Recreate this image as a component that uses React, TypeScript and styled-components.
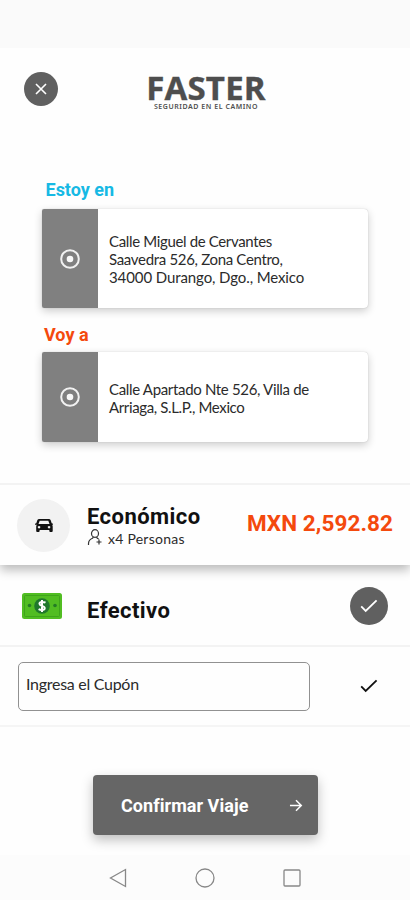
import React from "react";
import styled, { createGlobalStyle } from "styled-components";

const GlobalStyle = createGlobalStyle`
  * { box-sizing: border-box; }
  body { margin: 0; background: #fefefe; }
`;

const Screen = styled.main`
  width: 410px;
  height: 900px;
  display: flex;
  flex-direction: column;
  overflow: hidden;
  background: #fefefe;
  font-family: Roboto, sans-serif;
  color: #111;
`;

const StatusBar = styled.div`
  height: 48px;
  flex: none;
  background: #fafafa;
`;

const Header = styled.header`
  height: 130px;
  flex: none;
  display: flex;
  align-items: flex-start;
  padding: 24px 24px 0;
`;

const RoundButton = styled.button<{ $size: number }>`
  width: ${(p) => p.$size}px;
  height: ${(p) => p.$size}px;
  flex: none;
  padding: 0;
  border: 0;
  border-radius: 50%;
  background: #606060;
  display: flex;
  align-items: center;
  justify-content: center;
`;

const Brand = styled.div`
  width: 118px;
  margin-left: 89px;
  padding-top: 1px;
  display: flex;
  flex-direction: column;
  align-items: center;
  white-space: nowrap;
  font-family: "Open Sans", sans-serif;
  color: #4e4e4e;
`;

const BrandName = styled.div`
  font-size: 33px;
  line-height: 30px;
  font-weight: 700;
  letter-spacing: 0.2px;
  -webkit-text-stroke: 0.4px #4e4e4e;
`;

const BrandTagline = styled.div`
  font-family: "Noto Sans", sans-serif;
  font-size: 7px;
  line-height: 8px;
  font-weight: 600;
  letter-spacing: 0.55px;
`;

const Trip = styled.section`
  height: 305px;
  flex: none;
  padding: 0 42px;
`;

const StopLabel = styled.h2<{ $color: string; $indent: number; $height: number; $gap: number }>`
  margin: 0;
  height: ${(p) => p.$height}px;
  padding: 0 0 ${(p) => p.$gap}px ${(p) => p.$indent}px;
  display: flex;
  align-items: flex-end;
  font-size: 18px;
  line-height: 22px;
  font-weight: 700;
  color: ${(p) => p.$color};
`;

const StopCard = styled.div<{ $height: number }>`
  width: 326px;
  height: ${(p) => p.$height}px;
  display: flex;
  overflow: hidden;
  border-radius: 2px 4px 4px 2px;
  background: #fff;
  box-shadow: 0 3px 9px rgba(0, 0, 0, 0.2), 0 0 1px rgba(0, 0, 0, 0.25);
`;

const StopMarker = styled.div`
  width: 56px;
  flex: none;
  background: #808080;
  display: flex;
  align-items: center;
  justify-content: center;
`;

const Address = styled.div`
  padding: 1px 0 0 11px;
  align-self: center;
  font-family: Lato, sans-serif;
  font-size: 15px;
  line-height: 18px;
  color: #2b2b2b;
  white-space: nowrap;
`;

const AddressLine = styled.div<{ $tracking: number }>`
  letter-spacing: ${(p) => p.$tracking}px;
`;

const RideRow = styled.section`
  height: 82px;
  margin-bottom: 1px;
  flex: none;
  position: relative;
  display: flex;
  align-items: center;
  padding: 0 17px;
  border-top: 2px solid #f3f3f3;
  background: #fefefe;
  box-shadow: 0 5px 10px rgba(0, 0, 0, 0.27);
  clip-path: inset(0 0 -24px 0);
`;

const VehicleBadge = styled.div`
  width: 53px;
  height: 53px;
  border-radius: 50%;
  background: #f2f2f2;
  display: flex;
  align-items: center;
  justify-content: center;
`;

const RideInfo = styled.div`
  margin-left: 17px;
`;

const RowTitle = styled.div`
  font-size: 22px;
  line-height: 24px;
  font-weight: 700;
  letter-spacing: 0.45px;
`;

const Capacity = styled.div`
  height: 17px;
  display: flex;
  align-items: center;
  gap: 4px;
  font-family: Lato, sans-serif;
  font-size: 14px;
  line-height: 18px;
  color: #2b2b2b;
`;

const CapacityText = styled.span`
  padding-top: 3px;
  letter-spacing: 0.25px;
`;

const Price = styled.div`
  margin-left: auto;
  font-size: 22.5px;
  line-height: 28px;
  font-weight: 700;
  letter-spacing: 0.08px;
  color: #f4490d;
  padding-bottom: 5px;
  white-space: nowrap;
`;

const PaymentRow = styled.section`
  height: 81px;
  flex: none;
  display: flex;
  align-items: center;
  padding: 0 22px;
  border-bottom: 2px solid #f3f3f3;
`;

const PaymentTitle = styled(RowTitle)`
  margin: 10px auto 0 25px;
`;

const CouponRow = styled.section`
  height: 80px;
  flex: none;
  display: flex;
  align-items: center;
  padding: 0 32px 0 18px;
  border-bottom: 2px solid #f5f5f5;
`;

const CouponField = styled.div`
  width: 292px;
  height: 49px;
  margin-right: auto;
  padding: 11px 7px;
  border: 1px solid #919191;
  border-radius: 5px;
  font-family: Lato, sans-serif;
  font-size: 16px;
  line-height: 20px;
  letter-spacing: -0.28px;
  color: #2b2b2b;
`;

const Footer = styled.section`
  height: 128px;
  flex: none;
  display: flex;
  justify-content: center;
  align-items: flex-start;
  padding-top: 48px;
`;

const ConfirmButton = styled.button`
  width: 225px;
  height: 60px;
  margin-left: 1px;
  display: flex;
  align-items: center;
  justify-content: space-between;
  padding: 0 15px 0 28px;
  border: 0;
  border-radius: 4px;
  background: #666;
  color: #fff;
  font-family: Roboto, sans-serif;
  font-size: 18px;
  font-weight: 700;
  letter-spacing: 0.05px;
  box-shadow: 0 5px 12px rgba(0, 0, 0, 0.25);
`;

const NavBar = styled.nav`
  height: 45px;
  flex: none;
  display: flex;
  justify-content: center;
  align-items: center;
  gap: 67px;
  background: #fcfcfc;
`;

const Target = () => (
  <svg width="20" height="20" viewBox="0 0 20 20">
    <circle cx="10" cy="10" r="8.8" fill="none" stroke="#f1f1f1" strokeWidth="2" />
    <circle cx="10" cy="10" r="3.3" fill="#f8f8f8" />
  </svg>
);

const Check = ({ color }: { color: string }) => (
  <svg width="18" height="14" viewBox="0 0 18 14" fill="none" stroke={color} strokeWidth="1.8">
    <path d="M1.2 7.4 5.7 12 16.6 1.4" />
  </svg>
);

const Car = () => (
  <svg width="18" height="13" viewBox="0 0 18 14" preserveAspectRatio="none">
    <path
      fill="#111"
      fillRule="evenodd"
      d="M4.2 0h9.6q1.4 0 1.9 1.4l1 3.1 1.3.5v1.2l-1 .1q.7.8.7 1.8V13q0 1-1 1h-1.4q-1 0-1-1v-1.2H4.6V13q0 1-1 1H2.2q-1 0-1-1V8.100q0-1 .7-1.800L0 6.200V5l1.300-.5 1-3.100Q2.800 0 4.200 0ZM4.700 1.800 3.500 5.500h11l-1.200-3.700ZM4 7.500a1.300 1.300 0 1 0 .1 0ZM14 7.500a1.300 1.300 0 1 0 .1 0Z"
    />
  </svg>
);

const PersonPlus = () => (
  <svg width="17" height="17" viewBox="0 0 17 17" fill="none" stroke="#333" strokeWidth="1.2">
    <ellipse cx="8" cy="4.5" rx="3.5" ry="3.8" />
    <path d="M1.5 16v-1.5Q1.7 10.500 5.500 9.200L6.500 8M9.500 8q.5 1.500 2.200 2M12 10.500v5M9.500 13h5" />
  </svg>
);

const Banknote = () => (
  <svg width="40" height="26" viewBox="0 0 40 26">
    <rect width="40" height="26" rx="2.5" fill="#51bd22" />
    <rect x="2.5" y="2.5" width="35" height="21" rx="1" fill="none" stroke="#3ea51b" />
    <circle cx="7.5" cy="12.5" r="1.8" fill="#247c25" />
    <circle cx="33" cy="12.5" r="1.8" fill="#247c25" />
    <circle cx="20" cy="13" r="7.8" fill="#20782d" />
    <path
      d="M23.5 9.7Q21.5 8.6 19.5 9c-3 .6-2.5 3.2.5 3.9 3.5.8 3.5 3.6.6 4q-2 .3-4-.8M20 7v12"
      fill="none"
      stroke="#fff"
      strokeWidth="2"
    />
  </svg>
);

export default function App() {
  return (
    <>
      <GlobalStyle />
      <Screen>
        <StatusBar />
        <Header>
          <RoundButton $size={34} aria-label="Cerrar">
            <svg width="12" height="12" viewBox="0 0 12 12" stroke="#fff" strokeWidth="1.6">
              <path d="m1 1 10 10M11 1 1 11" />
            </svg>
          </RoundButton>
          <Brand>
            <BrandName>FASTER</BrandName>
            <BrandTagline>SEGURIDAD EN EL CAMINO</BrandTagline>
          </Brand>
        </Header>
        <Trip>
          <StopLabel $color="#16b9e4" $indent={3.5} $height={31} $gap={8}>Estoy en</StopLabel>
          <StopCard $height={99}>
            <StopMarker><Target /></StopMarker>
            <Address>
              <AddressLine $tracking={-0.35}>Calle Miguel de Cervantes</AddressLine>
              <AddressLine $tracking={-0.32}>Saavedra 526, Zona Centro,</AddressLine>
              <AddressLine $tracking={-0.1}>34000 Durango, Dgo., Mexico</AddressLine>
            </Address>
          </StopCard>
          <StopLabel $color="#f4490d" $indent={2} $height={44} $gap={6}>Voy a</StopLabel>
          <StopCard $height={90}>
            <StopMarker><Target /></StopMarker>
            <Address>
              <AddressLine $tracking={-0.33}>Calle Apartado Nte 526, Villa de</AddressLine>
              <AddressLine $tracking={-0.37}>Arriaga, S.L.P., Mexico</AddressLine>
            </Address>
          </StopCard>
        </Trip>
        <RideRow>
          <VehicleBadge><Car /></VehicleBadge>
          <RideInfo>
            <RowTitle>Económico</RowTitle>
            <Capacity>
              <PersonPlus />
              <CapacityText>x4 Personas</CapacityText>
            </Capacity>
          </RideInfo>
          <Price>MXN 2,592.82</Price>
        </RideRow>
        <PaymentRow>
          <Banknote />
          <PaymentTitle>Efectivo</PaymentTitle>
          <RoundButton $size={38} aria-label="Seleccionado"><Check color="#fff" /></RoundButton>
        </PaymentRow>
        <CouponRow>
          <CouponField>Ingresa el Cupón</CouponField>
          <Check color="#111" />
        </CouponRow>
        <Footer>
          <ConfirmButton>
            Confirmar Viaje
            <svg width="14" height="13" viewBox="0 0 15 14" fill="none" stroke="#fff" strokeWidth="1.6">
              <path d="M1 7h12M7.5 1.3 13.2 7l-5.7 5.7" />
            </svg>
          </ConfirmButton>
        </Footer>
        <NavBar>
          <svg width="20" height="20" viewBox="0 0 20 20" fill="none" stroke="#888" strokeWidth="1.3">
            <path d="M17.5 1.5v17L2.5 10Z" />
          </svg>
          <svg width="20" height="20" viewBox="0 0 20 20" fill="none" stroke="#888" strokeWidth="1.3">
            <circle cx="10" cy="10" r="9" />
          </svg>
          <svg width="20" height="20" viewBox="0 0 20 20" fill="none" stroke="#888" strokeWidth="1.3">
            <rect x="2" y="2" width="16" height="16" rx="1" />
          </svg>
        </NavBar>
      </Screen>
    </>
  );
}
